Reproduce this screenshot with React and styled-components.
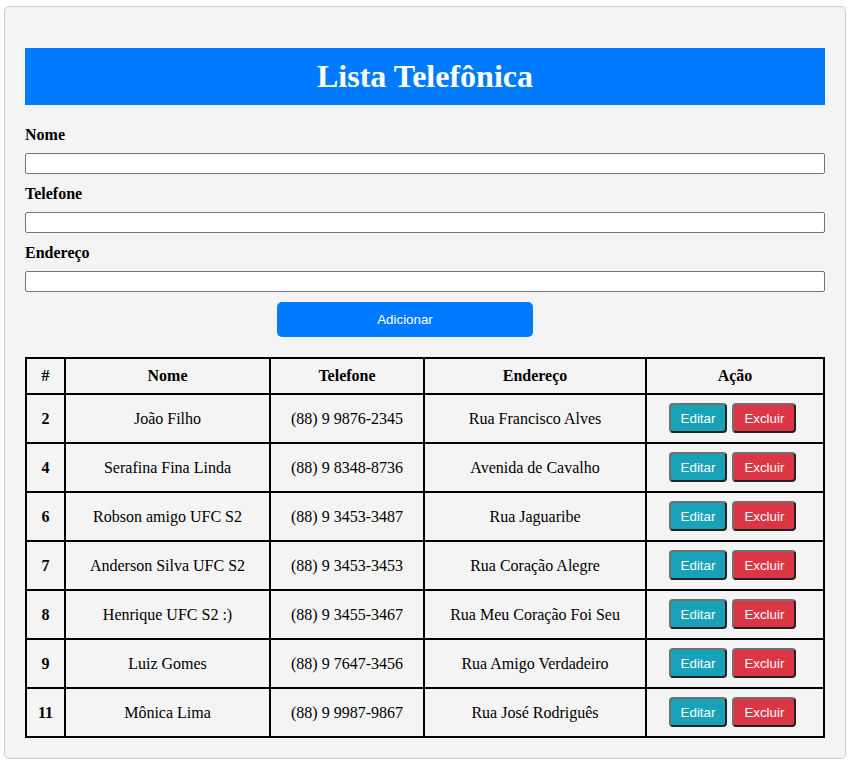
import styled, { createGlobalStyle } from "styled-components";

const contatos = [
    { id: 2, nome: "João Filho", telefone: "(88) 9 9876-2345", endereco: "Rua Francisco Alves" },
    { id: 4, nome: "Serafina Fina Linda", telefone: "(88) 9 8348-8736", endereco: "Avenida de Cavalho" },
    { id: 6, nome: "Robson amigo UFC S2", telefone: "(88) 9 3453-3487", endereco: "Rua Jaguaribe" },
    { id: 7, nome: "Anderson Silva UFC S2", telefone: "(88) 9 3453-3453", endereco: "Rua Coração Alegre" },
    { id: 8, nome: "Henrique UFC S2 :)", telefone: "(88) 9 3455-3467", endereco: "Rua Meu Coração Foi Seu" },
    { id: 9, nome: "Luiz Gomes", telefone: "(88) 9 7647-3456", endereco: "Rua Amigo Verdadeiro" },
    { id: 11, nome: "Mônica Lima", telefone: "(88) 9 9987-9867", endereco: "Rua José Rodriguês" },
];

const App = () => {
    return (
        <>
            <GlobalStyle />
            <Container>
                <Title>Lista Telefônica</Title>
                <Label>Nome</Label>
                <Input type="text" />
                <Label>Telefone</Label>
                <Input type="text" />
                <Label>Endereço</Label>
                <Input type="text" />
                <AddButton>Adicionar</AddButton>
                <Table>
                    <colgroup>
                        <col style={{ width: 39 }} />
                        <col style={{ width: 205 }} />
                        <col style={{ width: 154 }} />
                        <col style={{ width: 222 }} />
                        <col />
                    </colgroup>
                    <thead>
                        <tr>
                            <Th>#</Th>
                            <Th>Nome</Th>
                            <Th>Telefone</Th>
                            <Th>Endereço</Th>
                            <Th>Ação</Th>
                        </tr>
                    </thead>
                    <tbody>
                        {contatos.map((c) => (
                            <tr key={c.id}>
                                <Th>{c.id}</Th>
                                <Td>{c.nome}</Td>
                                <Td>{c.telefone}</Td>
                                <Td>{c.endereco}</Td>
                                <ActionCell>
                                    <ActionButton $color="#17a2b8">Editar</ActionButton>
                                    <ActionButton $color="#dc3545">Excluir</ActionButton>
                                </ActionCell>
                            </tr>
                        ))}
                    </tbody>
                </Table>
            </Container>
        </>
    );
};

const GlobalStyle = createGlobalStyle`
    body {
        margin: 0;
        background: #fff;
        font-family: "Liberation Serif", "Times New Roman", serif;
    }
`;

const Container = styled.div`
    width: 800px;
    margin: 6px 0 6px 4px;
    padding: 20px;
    background-color: #f4f4f4;
    border: 1px solid #ccc;
    border-radius: 5px;
`;

const Title = styled.h1`
    margin: 21px 0;
    padding: 10px;
    background-color: #007bff;
    color: #fff;
    font-size: 32px;
    line-height: 37px;
    text-align: center;
`;

const Label = styled.label`
    display: block;
    font-weight: bold;
    font-size: 16px;
    line-height: 18px;
    margin-bottom: 9px;
`;

const Input = styled.input`
    display: block;
    box-sizing: border-box;
    width: 100%;
    height: 21px;
    margin: 0 0 11px;
    border: 1px solid #767676;
    border-radius: 2px;
    background: #fff;
`;

const AddButton = styled.button`
    display: block;
    width: 256px;
    height: 35px;
    margin: -1px 0 20px 252px;
    border: none;
    border-radius: 5px;
    background-color: #007bff;
    color: #fff;
    font-family: "Liberation Sans", Arial, sans-serif;
    font-size: 13.33px;
`;

const Table = styled.table`
    width: 100%;
    table-layout: fixed;
    border-collapse: collapse;
    border: 2px solid #000;
`;

const Th = styled.th`
    border: 2px solid #000;
    padding: 8px;
    font-size: 16px;
    line-height: 18px;
    text-align: center;
`;

const Td = styled.td`
    border: 2px solid #000;
    padding: 8px;
    font-size: 16px;
    line-height: 18px;
    text-align: center;
    white-space: nowrap;
`;

const ActionCell = styled(Td)`
    padding: 8px 8px 9px;
`;

const ActionButton = styled.button`
    height: 30px;
    margin: 0 5px 0 0;
    padding: 0 10px;
    border: 2px solid;
    border-color: #707070 #222 #222 #707070;
    border-radius: 4px;
    background-color: ${(p) => p.$color};
    color: #fff;
    font-family: "Liberation Sans", Arial, sans-serif;
    font-size: 13.33px;
    vertical-align: middle;
`;

export default App;
